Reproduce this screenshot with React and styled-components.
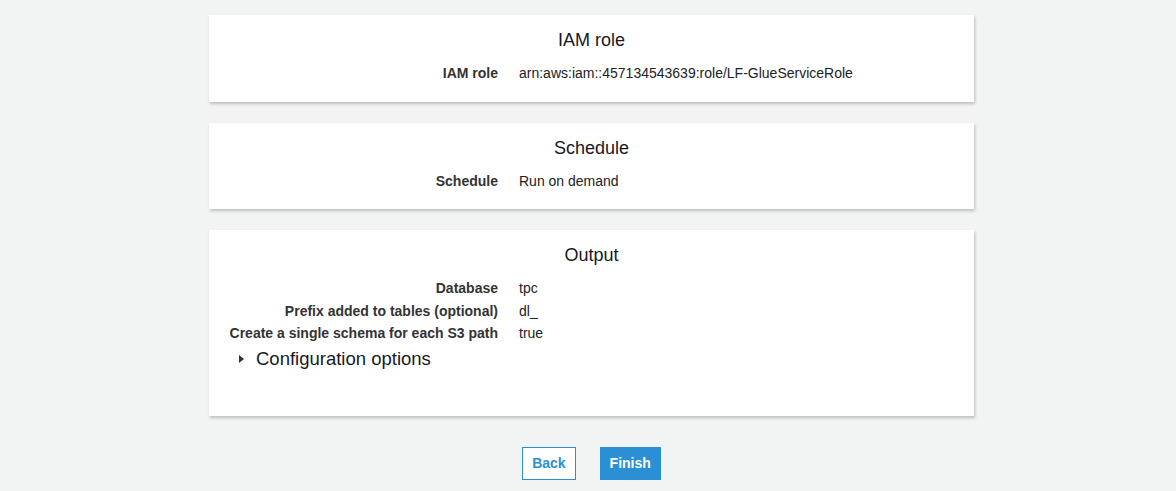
import React from 'react';
import styled, { createGlobalStyle } from 'styled-components';

const GlobalStyle = createGlobalStyle`
  body {
    margin: 0;
    background: #f2f3f3;
    font-family: "Liberation Sans", Arial, sans-serif;
    color: #16191f;
  }
`;

const Page = styled.div`
  width: 765px;
  margin-left: 209px;
  padding-top: 15px;
  display: flex;
  flex-direction: column;
  gap: 21px;
`;

const Card = styled.section`
  background: #fff;
  box-shadow: 1px 2px 3px rgba(0, 0, 0, 0.22);
  padding: 14px 20px ${p => p.$bottom || 17}px;
`;

const Title = styled.h2`
  margin: 0 0 11px;
  font-size: 18px;
  line-height: 22px;
  font-weight: 400;
  text-align: center;
  color: #16191f;
`;

const Row = styled.div`
  display: grid;
  grid-template-columns: 269px 1fr;
  column-gap: 21px;
  font-size: 14px;
  line-height: 22.5px;
`;

const Label = styled.div`
  text-align: right;
  font-weight: 700;
  color: #333;
`;

const Value = styled.div`
  color: #222;
`;

const Expander = styled.div`
  display: flex;
  align-items: center;
  gap: 12px;
  padding-left: 10px;
  margin-top: 1px;
  font-size: 18.5px;
  line-height: 26px;
  color: #16191f;
`;

const Caret = styled.span`
  width: 0;
  height: 0;
  border-top: 4px solid transparent;
  border-bottom: 4px solid transparent;
  border-left: 5px solid #333;
`;

const Actions = styled.div`
  display: flex;
  justify-content: center;
  gap: 24px;
  margin-top: 10px;
`;

const Button = styled.button`
  height: 33px;
  padding: 0 9px;
  font-family: "Liberation Sans", Arial, sans-serif;
  font-size: 14px;
  font-weight: 700;
  border: 1px solid #2b8fd6;
  background: ${p => (p.$primary ? '#2b8fd6' : '#fff')};
  color: ${p => (p.$primary ? '#fff' : '#2b8fd6')};
  cursor: pointer;
`;

const sections = [
  { title: 'IAM role', rows: [['IAM role', 'arn:aws:iam::457134543639:role/LF-GlueServiceRole']] },
  { title: 'Schedule', rows: [['Schedule', 'Run on demand']] },
];

const outputRows = [
  ['Database', 'tpc'],
  ['Prefix added to tables (optional)', 'dl_'],
  ['Create a single schema for each S3 path', 'true'],
];

export default function App() {
  return (
    <>
      <GlobalStyle />
      <Page>
        {sections.map(s => (
          <Card key={s.title}>
            <Title>{s.title}</Title>
            {s.rows.map(([k, v]) => (
              <Row key={k}>
                <Label>{k}</Label>
                <Value>{v}</Value>
              </Row>
            ))}
          </Card>
        ))}
        <Card $bottom={44}>
          <Title>Output</Title>
          {outputRows.map(([k, v]) => (
            <Row key={k}>
              <Label>{k}</Label>
              <Value>{v}</Value>
            </Row>
          ))}
          <Expander>
            <Caret />
            Configuration options
          </Expander>
        </Card>
        <Actions>
          <Button>Back</Button>
          <Button $primary>Finish</Button>
        </Actions>
      </Page>
    </>
  );
}
